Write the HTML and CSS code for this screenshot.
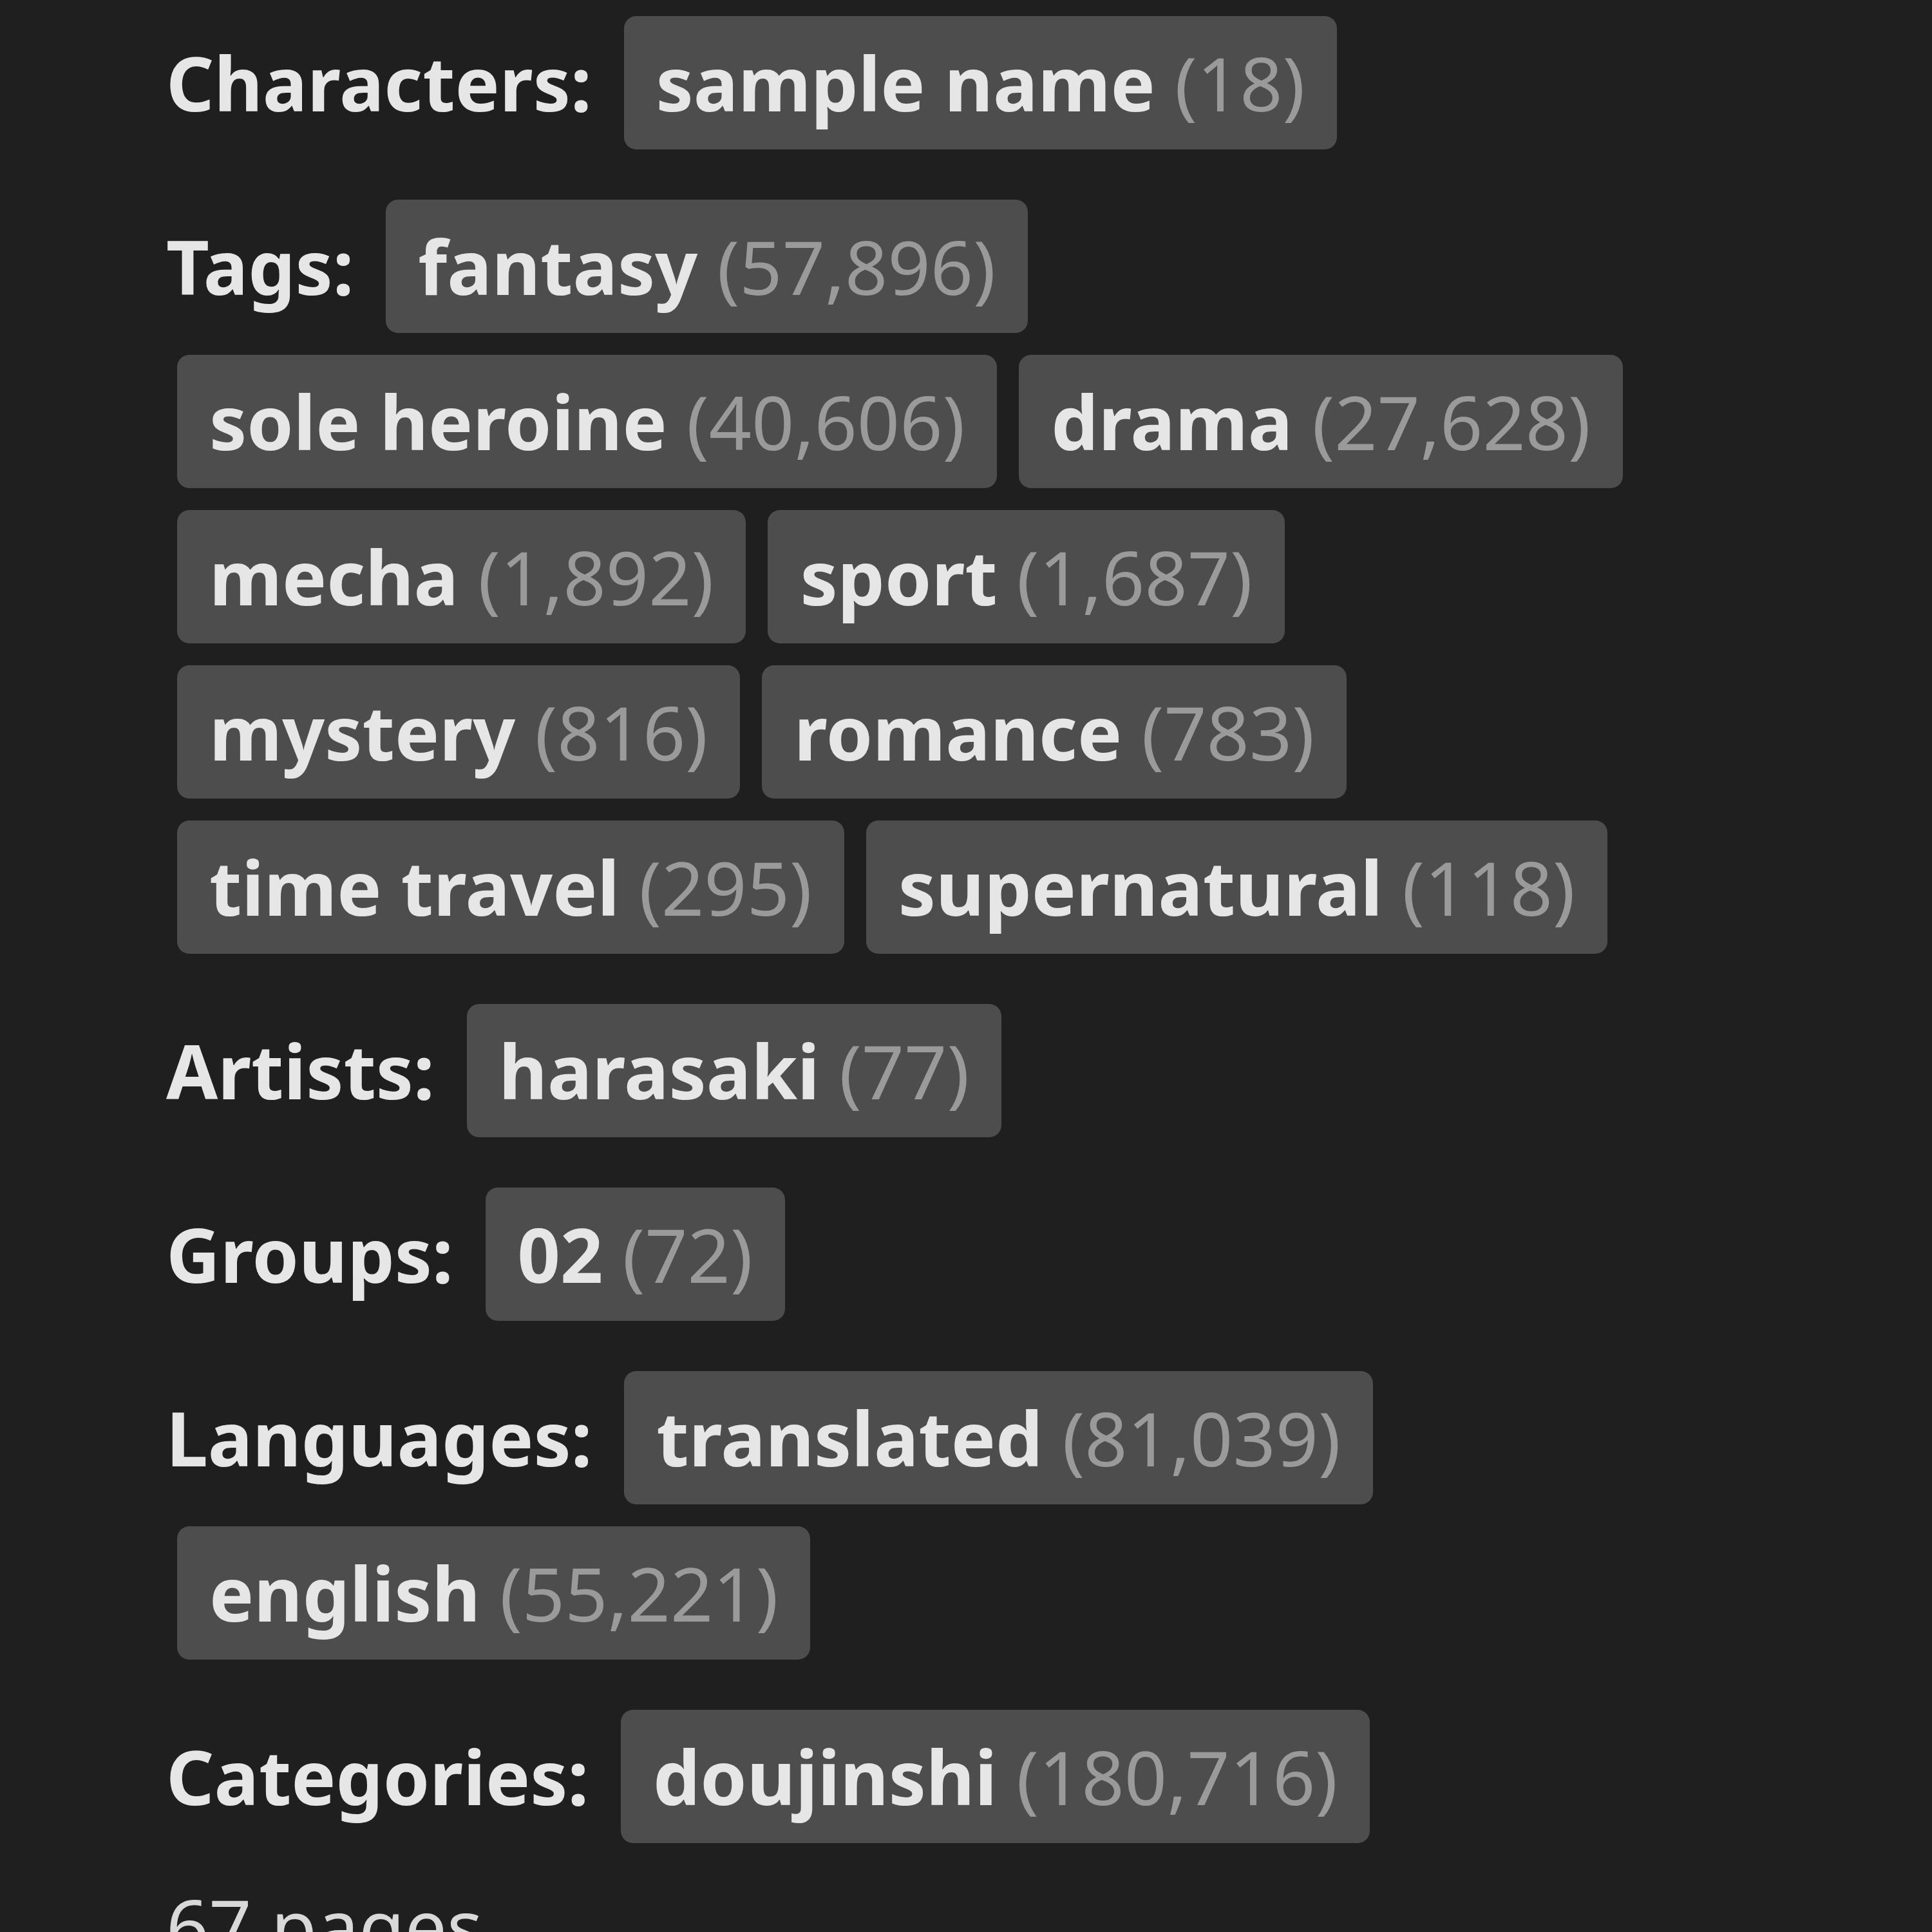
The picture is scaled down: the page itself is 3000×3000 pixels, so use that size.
FILE: index.html
```html
<!DOCTYPE html>
<html>
<head>
<meta charset="utf-8">
<link rel="stylesheet" href="styles.css">
</head>
<body>
<div class="tags">
  <section class="row">
    <span class="label">Characters:</span>
    <a class="tag"><span class="name">sample name</span> <span class="count">(18)</span></a>
  </section>
  <section class="row">
    <span class="label">Tags:</span>
    <a class="tag"><span class="name">fantasy</span> <span class="count">(57,896)</span></a>
    <a class="tag"><span class="name">sole heroine</span> <span class="count">(40,606)</span></a>
    <a class="tag"><span class="name">drama</span> <span class="count">(27,628)</span></a>
    <a class="tag"><span class="name">mecha</span> <span class="count">(1,892)</span></a>
    <a class="tag"><span class="name">sport</span> <span class="count">(1,687)</span></a>
    <a class="tag"><span class="name">mystery</span> <span class="count">(816)</span></a>
    <a class="tag"><span class="name">romance</span> <span class="count">(783)</span></a>
    <a class="tag"><span class="name">time travel</span> <span class="count">(295)</span></a>
    <a class="tag"><span class="name">supernatural</span> <span class="count">(118)</span></a>
  </section>
  <section class="row">
    <span class="label">Artists:</span>
    <a class="tag"><span class="name">harasaki</span> <span class="count">(77)</span></a>
  </section>
  <section class="row">
    <span class="label">Groups:</span>
    <a class="tag"><span class="name">02</span> <span class="count">(72)</span></a>
  </section>
  <section class="row">
    <span class="label">Languages:</span>
    <a class="tag"><span class="name">translated</span> <span class="count">(81,039)</span></a>
    <a class="tag"><span class="name">english</span> <span class="count">(55,221)</span></a>
  </section>
  <section class="row">
    <span class="label">Categories:</span>
    <a class="tag"><span class="name">doujinshi</span> <span class="count">(180,716)</span></a>
  </section>
  <div class="pages">67 pages</div>
</div>
</body>
</html>
```
FILE: styles.css
```css
html, body {
  margin: 0;
  padding: 0;
  background: #1f1f1f;
}
body {
  width: 3000px;
  height: 3000px;
  overflow: hidden;
  font-family: "Noto Sans", "Open Sans", sans-serif;
  color: #d9d9d9;
}
.tags {
  padding: 25px 0 0 275px;
  width: 2300px;
}
.row {
  display: flex;
  flex-wrap: wrap;
  align-items: baseline;
  column-gap: 34px;
  row-gap: 34px;
  margin-bottom: 78px;
}
.label {
  font-size: 116px;
  font-weight: 700;
  color: #e6e6e6;
  margin-left: -17px;
  margin-right: 16px;
}
.tag {
  display: inline-block;
  background: #4d4d4d;
  border-radius: 19px;
  padding: 0 50px;
  height: 207px;
  line-height: 207px;
  font-size: 116px;
  white-space: nowrap;
}
.name {
  font-weight: 700;
  color: #e6e6e6;
}
.count {
  font-weight: 400;
  color: #9a9a9a;
}
.pages {
  font-size: 116px;
  color: #d9d9d9;
  margin-left: -17px;
  margin-top: -30px;
}
```
